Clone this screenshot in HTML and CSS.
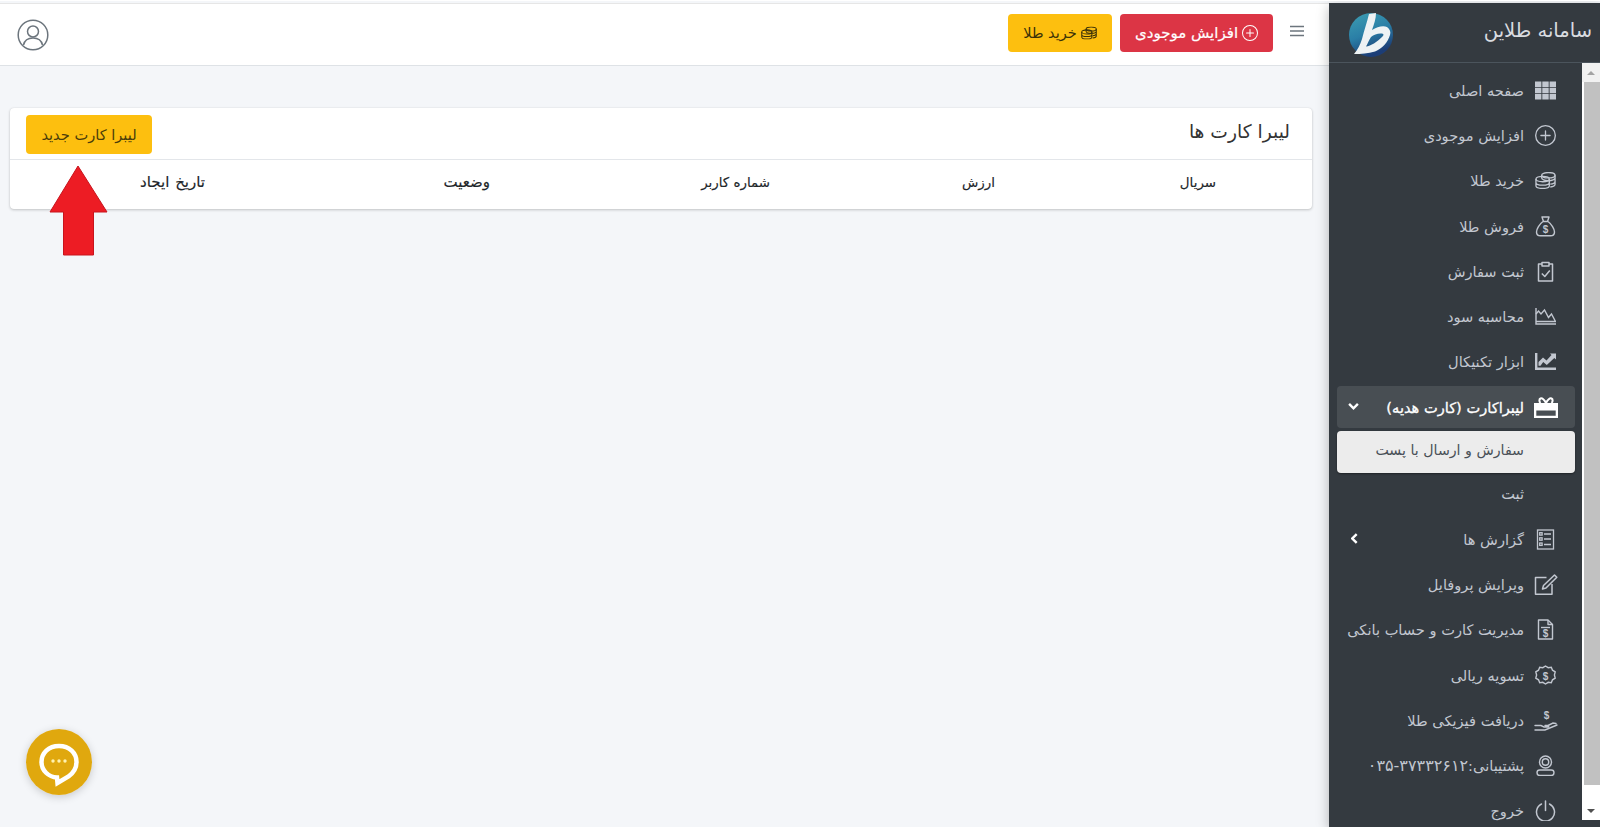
FILE: index.html
```html
<!DOCTYPE html>
<html lang="fa" dir="rtl">
<head>
<meta charset="utf-8">
<title>سامانه طلاین</title>
<link rel="stylesheet" href="styles.css">
</head>
<body>
<svg class="defs" width="0" height="0" aria-hidden="true">
  <symbol id="i-plus" viewBox="0 0 16 16"><path fill="currentColor" d="M8 15A7 7 0 1 1 8 1a7 7 0 0 1 0 14zm0 1A8 8 0 1 0 8 0a8 8 0 0 0 0 16z"/><path fill="currentColor" d="M8 4a.5.5 0 0 1 .5.5v3h3a.5.5 0 0 1 0 1h-3v3a.5.5 0 0 1-1 0v-3h-3a.5.5 0 0 1 0-1h3v-3A.5.5 0 0 1 8 4z"/></symbol>
  <symbol id="i-coins" viewBox="0 0 22 18"><g fill="none" stroke="currentColor" stroke-width="1.400"><ellipse cx="14" cy="3.500" rx="7" ry="2.800"/><path d="M7 3.500v3c0 1.400 3 2.800 7 2.800s7-1.400 7-2.800v-3M21 6.500v3.500c0 1.300-2 2.500-5 2.800M21 10v3c0 1.300-2 2.500-5 2.800"/><ellipse cx="8" cy="7.500" rx="7" ry="2.800"/><path d="M1 7.500v7c0 1.500 3 2.800 7 2.800s7-1.300 7-2.800v-7M1 11c0 1.500 3 2.800 7 2.800s7-1.300 7-2.800"/></g></symbol>
</svg>

<aside class="sidebar">
  <div class="brand">
    <span class="brand-name">سامانه طلاین</span>
    <svg class="logo" viewBox="0 0 44 44" aria-hidden="true">
      <defs><linearGradient id="lg" x1="0" y1="0" x2="0.4" y2="1"><stop offset="0" stop-color="#3d9fb3"/><stop offset="0.55" stop-color="#2a7ea6"/><stop offset="1" stop-color="#1c3d76"/></linearGradient></defs>
      <circle cx="22" cy="22" r="22" fill="url(#lg)"/>
      <path fill="#eef2f4" fill-rule="evenodd" d="M20 1L27 0C27 6 25 11 23 17C28 14 34 12 38 14C41 16 42 19 41 22C39 29 33 36 26 38.500C19 40.500 12 41 5 41C9 36 11 32 13 26C15 18 18 9 20 1ZM17 33.500C22 33 28 29 33 24C35 22 35 21 33 20.500C29 20 25 21.500 22 24C20 27 19 30 17 33.500Z"/>
    </svg>
  </div>
  <div class="sidebar-body">
    <div class="scrollbar" aria-hidden="true">
      <div class="sb-btn first"><span class="tri up"></span></div>
      <div class="sb-thumb"></div>
      <div class="sb-rest"></div>
      <div class="sb-btn"><span class="tri down"></span></div>
    </div>
    <nav class="menu">
      <a class="item"><svg class="ico" viewBox="0 0 21 18"><path fill="currentColor" d="M0 0h6.400v5.400H0zM7.300 0h6.400v5.400H7.300zM14.600 0H21v5.400h-6.400zM0 6.300h6.400v5.400H0zM7.300 6.300h6.400v5.400H7.300zM14.600 6.300H21v5.400h-6.400zM0 12.600h6.400V18H0zM7.300 12.600h6.400V18H7.300zM14.600 12.600H21V18h-6.400z"/></svg><span>صفحه اصلی</span></a>
      <a class="item"><svg class="ico" viewBox="0 0 16 16"><use href="#i-plus"/></svg><span>افزایش موجودی</span></a>
      <a class="item"><svg class="ico" viewBox="0 0 22 18"><use href="#i-coins"/></svg><span>خرید طلا</span></a>
      <a class="item"><svg class="ico" viewBox="0 0 21 21"><g fill="none" stroke="currentColor" stroke-width="1.400" stroke-linejoin="round"><path d="M7 1h7l-1.500 4.500h-4zM8 5.500C4.500 8 1.500 13 1.500 16c0 2.500 2 3.800 4 3.800h10c2 0 4-1.300 4-3.800 0-3-3-8-6.500-10.500z"/></g><text class="dollar" x="10.500" y="16.500">$</text></svg><span>فروش طلا</span></a>
      <a class="item"><svg class="ico" viewBox="0 0 21 21"><g fill="none" stroke="currentColor" stroke-width="1.500" stroke-linejoin="round"><path d="M7 3H3.500v17h14V3H14"/><path d="M7 1.500h7v3.500H7z"/><path d="M6.800 12.500l3 3 5-6"/></g></svg><span>ثبت سفارش</span></a>
      <a class="item"><svg class="ico" viewBox="0 0 21 17"><g fill="none" stroke="currentColor" stroke-width="1.400"><path d="M1 0v16h20"/><path d="M1 13.500h19.500L16.500 6l-3 3.500L9.500 2 6 6 3.500 3 1 6"/></g></svg><span>محاسبه سود</span></a>
      <a class="item"><svg class="ico" viewBox="0 0 21 17"><path fill="currentColor" d="M0 0h2.400v14.400H21V17H0z"/><path fill="currentColor" d="M3.500 12.800V9l4.500-4.500 3.500 3L16.500 2 15 .5h6v6L19.300 5l-7.500 7-3.600-3-2.700 3.800z"/></svg><span>ابزار تکنیکال</span></a>
      <a class="item active"><svg class="ico gift" viewBox="0 0 24 21"><path fill="currentColor" fill-rule="evenodd" d="M0 6h24v15H0zm2.300 7.500v5.200h19.400v-5.200z"/><path fill="none" stroke="currentColor" stroke-width="2" d="M12 6C10.500 2.500 8 .8 6.500 1.500 5 2.200 5 4.500 6.500 6M12 6c1.500-3.500 4-5.200 5.500-4.500C19 2.200 19 4.500 17.500 6"/></svg><span class="strong">لیبراکارت (کارت هدیه)</span><svg class="chev" viewBox="0 0 12 8"><path fill="none" stroke="currentColor" stroke-width="2.800" d="M1 1l5 5 5-5"/></svg></a>
      <a class="item sub"><span class="lift">سفارش و ارسال با پست</span></a>
      <a class="item plain"><span>ثبت</span></a>
      <a class="item"><svg class="ico" viewBox="0 0 18 21"><g fill="none" stroke="currentColor" stroke-width="1.300"><rect x="1" y="1" width="16" height="19"/><path d="M7.500 5h7M7.500 10h7M7.500 15.500h7"/><rect x="3.200" y="3.700" width="2.400" height="2.400"/><rect x="3.200" y="8.800" width="2.400" height="2.400"/><rect x="3.200" y="14" width="2.400" height="2.400"/></g></svg><span>گزارش ها</span><svg class="chev side" viewBox="0 0 8 12"><path fill="none" stroke="currentColor" stroke-width="2.800" d="M6.500 1l-5 5 5 5"/></svg></a>
      <a class="item"><svg class="ico big" viewBox="0 0 23 21"><g fill="none" stroke="currentColor" stroke-width="1.500" stroke-linejoin="round"><path d="M12 3.500H1v16.700h16.500V10"/><path d="M20 1l2.300 2.300L11.500 14 8 15l1-3.500z"/></g></svg><span>ویرایش پروفایل</span></a>
      <a class="item"><svg class="ico" viewBox="0 0 21 21"><g fill="none" stroke="currentColor" stroke-width="1.400" stroke-linejoin="round"><path d="M3.500 1h9.500l4.500 4.500V20h-14z"/><path d="M13 1v4.500h4.500"/><path d="M6 8.500h9"/></g><text class="dollar" x="10.500" y="17.500">$</text></svg><span>مدیریت کارت و حساب بانکی</span></a>
      <a class="item"><svg class="ico" viewBox="0 0 21 21"><path fill="none" stroke="currentColor" stroke-width="1.400" d="M10.500 1l2.700 1.700 3.100-.4 1.200 2.900 2.700 1.700-.8 3.100.8 3.100-2.700 1.700-1.200 2.900-3.100-.4-2.700 1.700-2.700-1.700-3.100.4-1.200-2.900L.8 13.100l.8-3.100-.8-3.100 2.700-1.700 1.200-2.900 3.100.4z"/><text class="dollar" x="10.500" y="15">$</text></svg><span>تسویه ریالی</span></a>
      <a class="item"><svg class="ico big" viewBox="0 0 24 21"><g fill="none" stroke="currentColor" stroke-width="1.400" stroke-linecap="round"><path d="M1 20h10l12-5M1 15.500h6l3 1.500h4c1 0 1-1.500 0-1.500h-3M14 15.500l5-2.500 3 .5"/></g><text class="dollar" x="12.500" y="9">$</text></svg><span>دریافت فیزیکی طلا</span></a>
      <a class="item"><svg class="ico" viewBox="0 0 21 21"><g fill="none" stroke="currentColor" stroke-width="1.400"><circle cx="10.500" cy="7" r="6"/><circle cx="10.500" cy="7" r="3.200"/><rect x="2" y="15" width="17" height="5.500" rx="2.700"/></g></svg><span>پشتیبانی:<bdi class="phone" dir="ltr">۰۳۵-۳۷۳۳۲۶۱۲</bdi></span></a>
      <a class="item"><svg class="ico" viewBox="0 0 21 21"><g fill="none" stroke="currentColor" stroke-width="1.500" stroke-linecap="round"><path d="M6.500 4a9 9 0 1 0 8 0"/><path d="M10.500 1v9.500"/></g></svg><span>خروج</span></a>
    </nav>
  </div>
</aside>

<div class="content">
  <header class="topbar">
    <svg class="burger" viewBox="0 0 14 12" aria-hidden="true"><path fill="none" stroke="#6c757d" stroke-width="1.600" d="M0 1.500h14M0 6h14M0 10.500h14"/></svg>
    <a class="btn red"><svg class="btn-ico" viewBox="0 0 16 16"><use href="#i-plus"/></svg>افزایش موجودی</a>
    <a class="btn yellow"><svg class="btn-ico" viewBox="0 0 22 18"><use href="#i-coins"/></svg>خرید طلا</a>
    <svg class="avatar" viewBox="0 0 32 32" aria-hidden="true"><g fill="none" stroke="#6c757d" stroke-width="1.500"><circle cx="16" cy="16" r="14.800"/><circle cx="16" cy="12.500" r="5.500"/><path d="M6.500 26c1-4.500 4.500-7 9.500-7s8.500 2.500 9.500 7"/></g></svg>
  </header>
  <main class="main">
    <section class="card">
      <div class="card-head">
        <h1>لیبرا کارت ها</h1>
        <a class="btn yellow new">لیبرا کارت جدید</a>
      </div>
      <div class="thead">
        <div>سریال</div>
        <div>ارزش</div>
        <div>شماره کاربر</div>
        <div class="roomy">وضعیت</div>
        <div class="roomy">تاریخ ایجاد</div>
      </div>
    </section>
  </main>
</div>

<svg class="arrow" viewBox="0 0 60 92" aria-hidden="true"><path fill="#ed1c24" stroke="#c8141d" stroke-width="1" stroke-linejoin="round" d="M29 1L1 47h13.500v43h30V47H58z"/></svg>

<a class="chat" aria-label="chat">
  <svg viewBox="0 0 66 66" aria-hidden="true">
    <circle cx="33" cy="33" r="33" fill="#e0a80e"/>
    <path fill="none" stroke="#fff" stroke-width="4.500" d="M31 48.500c-8.500-.5-15.500-7-15.500-15.500 0-9 7-16 17.500-16s17.500 7 17.500 16c0 7-4 11.500-8 14.500l-11 6.500z"/>
    <circle cx="27" cy="32" r="1.700" fill="#fff3b0"/><circle cx="33" cy="32" r="1.700" fill="#fff3b0"/><circle cx="39" cy="32" r="1.700" fill="#fff3b0"/>
  </svg>
</a>
</body>
</html>
```

FILE: styles.css
```css
* { box-sizing: border-box; }
html, body { height: 100%; }
body {
  margin: 0;
  height: 827px;
  overflow: hidden;
  display: flex;
  background: #f4f6f9;
  font-family: "DejaVu Sans", sans-serif;
  font-size: 14.6px;
  color: #212529;
  position: relative;
  border-top: 1px solid #fff;
}
.defs { position: absolute; }

/* sidebar */
.sidebar {
  width: 271px;
  flex: none;
  height: 824px;
  margin-top: 2px;
  background: #343a40;
  color: #c2c7d0;
  box-shadow: 0 4px 12px rgba(0, 0, 0, .28);
  display: flex;
  flex-direction: column;
  position: relative;
  z-index: 2;
}
.brand {
  height: 60px;
  flex: none;
  border-bottom: 1px solid #4b545c;
  display: flex;
  align-items: center;
  justify-content: space-between;
  padding: 0 8px 0 20px;
}
.brand-name { font-size: 19.5px; color: #d9dce0; margin-bottom: 5px; }
.logo { width: 44px; height: 44px; margin-top: 5px; }
.sidebar-body { flex: 1; display: flex; min-height: 0; }
.menu {
  flex: 1;
  padding: 6px 7px 0 8px;
  display: flex;
  flex-direction: column;
  gap: 3px;
}
.item {
  height: 42.3px;
  flex: none;
  display: flex;
  align-items: center;
  gap: 11px;
  padding-right: 19px;
  white-space: nowrap;
  border-radius: 4px;
  position: relative;
}
.ico { width: 21px; height: 21px; flex: none; }
.ico.gift { width: 24px; margin-right: -2px; margin-left: -1px; }
.ico.big { width: 24px; margin-right: -2px; margin-left: -1px; }
.dollar { font: 700 10px "Liberation Sans", sans-serif; fill: currentColor; text-anchor: middle; }
.active { background: rgba(255, 255, 255, .1); color: #fff; }
.strong { -webkit-text-stroke: .3px currentColor; }
.chev { position: absolute; left: 11px; top: 17px; width: 11px; height: 7px; color: #fff; }
.chev.side { left: 14px; top: 15px; width: 7px; height: 11px; }
.phone { font-size: 16px; letter-spacing: 1px; }
.sub {
  height: 41.3px;
  margin-bottom: -3px;
  background: #ececec;
  color: #495057;
  font-size: 14.2px;
  padding-right: 51px;
  box-shadow: 0 1px 2px rgba(0, 0, 0, .4);
}
.lift { margin-bottom: 4px; }
.plain { padding-right: 51px; }

/* custom scrollbar */
.scrollbar {
  width: 18px;
  flex: none;
  background: #fff;
  display: flex;
  flex-direction: column;
  height: 757px;
}
.sb-btn { height: 19px; flex: none; display: flex; align-items: center; justify-content: center; }
.sb-btn.first { background: #f1f1f1; }
.sb-thumb { height: 703px; flex: none; background: #c1c1c1; margin-inline-end: 2px; }
.sb-rest { flex: 1; }
.tri { width: 0; height: 0; border-left: 4px solid transparent; border-right: 4px solid transparent; }
.tri.up { border-bottom: 4px solid #a3a3a3; }
.tri.down { border-top: 4px solid #505050; }

/* top bar */
.content { flex: 1; min-width: 0; display: flex; flex-direction: column; }
.topbar {
  margin-top: 2px;
  height: 63px;
  flex: none;
  background: #fff;
  border-top: 1px solid #e6e6e6;
  border-bottom: 1px solid #dee2e6;
  display: flex;
  align-items: center;
  padding: 0 25px 3px 17px;
}
.burger { width: 14px; height: 12px; margin: 0 0 4px 17px; flex: none; }
.btn {
  height: 38px;
  display: inline-flex;
  align-items: center;
  justify-content: center;
  gap: 4px;
  border-radius: 4px;
  white-space: nowrap;
  font-size: 14.5px;
}
.red { width: 153px; background: #dc3545; color: #fff; margin-left: 8px; font-size: 15px; -webkit-text-stroke: .2px currentColor; }
.yellow { width: 104px; background: #fdbf0f; color: #3a3108; }
.btn-ico { width: 16px; height: 16px; flex: none; }
.avatar { width: 32px; height: 32px; margin-right: auto; margin-top: 4px; }

/* main */
.main { flex: 1; padding: 42px 17px 0 10px; }
.card {
  background: #fff;
  border-radius: 4px;
  box-shadow: 0 0 1px rgba(0, 0, 0, .125), 0 1px 3px rgba(0, 0, 0, .2);
}
.card-head {
  height: 52px;
  border-bottom: 1px solid #e3e6ea;
  display: flex;
  align-items: center;
  justify-content: space-between;
  padding: 0 22px 0 16px;
}
.card-head h1 { margin: 0 0 4px; font-size: 18.7px; font-weight: 400; color: #333; }
.new { width: 126px; height: 39px; margin-top: 2px; font-size: 14.6px; color: #4a3c0a; }
.thead {
  height: 49px;
  padding: 0 96px 5px 0;
  display: grid;
  grid-template-columns: 221px 225px 280px 285px 195px;
  align-items: center;
  font-size: 13.4px;
  -webkit-text-stroke: .15px currentColor;
}
.roomy { font-size: 15px; word-spacing: 1px; }

/* overlays */
.arrow { position: absolute; left: 49px; top: 164px; width: 60px; height: 92px; }
.chat { position: absolute; left: 26px; top: 728px; width: 66px; height: 66px; border-radius: 50%; box-shadow: 0 2px 8px rgba(0, 0, 0, .18); }
.chat svg { width: 66px; height: 66px; display: block; }
```
